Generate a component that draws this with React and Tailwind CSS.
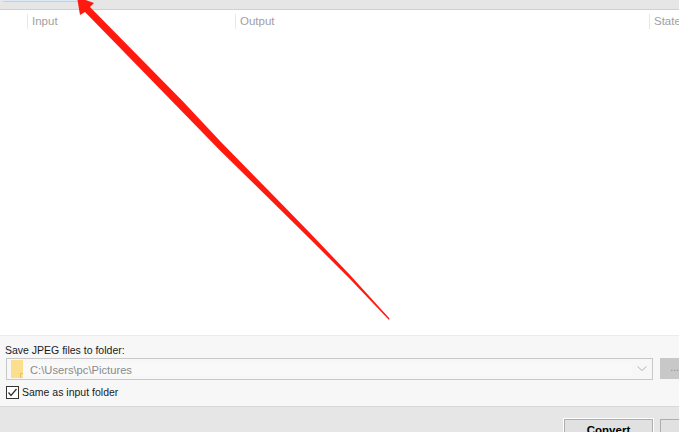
export default function App() {
  return (
    <div className="relative w-[679px] h-[434px] overflow-hidden bg-white text-[10.5px] font-['Liberation_Sans',sans-serif]">
      <div className="h-[434px] flex flex-col">
        <div className="h-[9px] shrink-0 bg-[#e6e6e6]">
          <div className="w-[75px] h-[2px] ml-[3px] bg-[#dbe8f5] border-b border-[#b9d3ea]" />
        </div>
        <div className="h-px shrink-0 bg-[#d0d0d0]" />
        <div className="h-[21px] pt-[2px] shrink-0 flex items-center text-[#a0a0a0] text-[11.5px]">
          <div className="w-[27px] shrink-0" />
          <div className="w-[208px] shrink-0 border-l border-[#e3e9f2] pl-1 h-[15px] leading-[15px]">Input</div>
          <div className="w-[414px] shrink-0 border-l border-[#e3e9f2] pl-1 h-[15px] leading-[15px]">Output</div>
          <div className="flex-1 border-l border-[#e3e9f2] pl-1 h-[15px] leading-[15px]">State</div>
        </div>
        <div className="flex-1 border-b border-[#ececec]" />
        <div className="h-[71px] shrink-0 bg-[#f7f7f7] border-b border-[#d8d8d8] pl-[6px] pt-[7px] flex flex-col text-[#1a1a1a]">
          <div className="h-[15px] leading-[14px] -ml-px">Save JPEG files to folder:</div>
          <div className="flex gap-[7px]">
            <div className="w-[648px] h-[22px] border border-[#c8c8c8] bg-[#f7f7f7] flex items-center">
              <div className="flex-1 h-[13px] bg-[#f9f9f9] flex items-center ml-[4px]">
                <svg width="12" height="18" viewBox="0 0 12 18" className="shrink-0 -my-[3px]">
                  <rect x="0" y="0" width="12" height="18" fill="#fbdf8c" />
                  <path d="M9.5 18V13.5H12" fill="none" stroke="#e6c260" />
                </svg>
                <span className="ml-[7px] pt-[2px] text-[#8a8a8a] text-[11.2px]">C:\Users\pc\Pictures</span>
              </div>
              <svg width="12" height="8" viewBox="0 0 12 8" className="mx-[4px] shrink-0">
                <path d="M1.5 1.5L6 5.5L10.5 1.5" fill="none" stroke="#b5b5b5" />
              </svg>
            </div>
            <div className="flex-1 h-[21px] bg-[#c8c8c8] text-[#888888] pl-[10px] leading-[18px]">...</div>
          </div>
          <label className="mt-[3px] flex items-center h-[18px]">
            <span className="w-[13px] h-[13px] border border-[#333333] bg-white flex items-center justify-center">
              <svg width="11" height="11" viewBox="0 0 11 11"><path d="M1.5 5.5L4 8.5L9.5 2" fill="none" stroke="#333333" strokeWidth="1.3" /></svg>
            </span>
            <span className="ml-[3px] pt-px">Same as input folder</span>
          </label>
        </div>
        <div className="h-[25px] shrink-0 bg-[#e6e6e6] flex justify-end gap-[7px] pt-[12px] overflow-hidden">
          <div className="w-[89px] h-[30px] shrink-0 bg-[#e1e1e1] border border-[#adadad] outline outline-white text-center text-black font-bold text-[11.5px] leading-[20px]">Convert</div>
          <div className="w-[19px] h-[30px] shrink-0 bg-[#e1e1e1] border border-[#adadad] border-r-0" />
        </div>
        <div className="h-[2px] shrink-0 bg-white" />
      </div>
      <svg width="679" height="434" className="absolute left-0 top-0 pointer-events-none">
        <polygon points="77,-3 94,3 90,7 183,101.5 220,141 270,192 310,233 350,275 389.5,318.5 389,320 350,279 310,239 270,199.5 220,150.5 183,112.5 85,12 80,15" fill="#ff1a10" />
      </svg>
    </div>
  );
}
